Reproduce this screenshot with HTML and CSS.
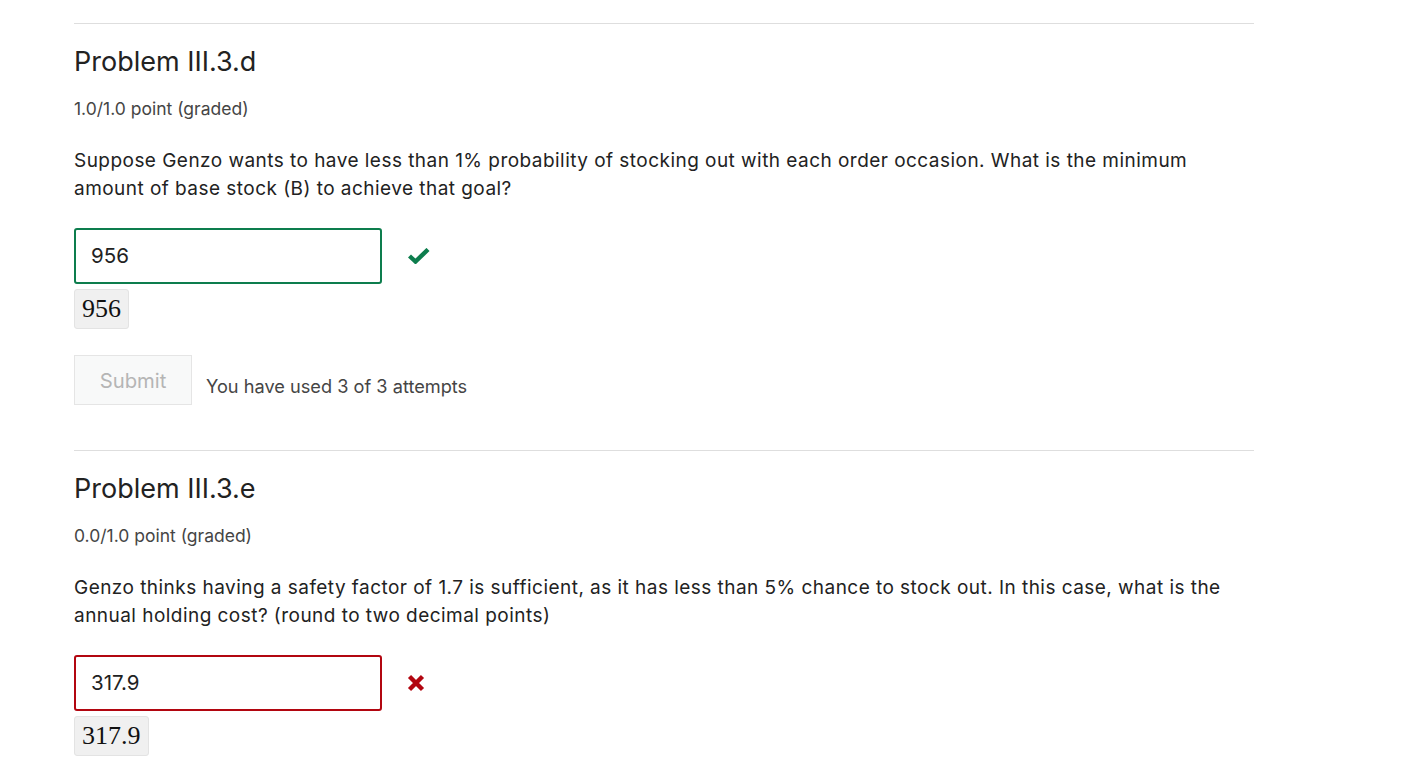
FILE: index.html
```html
<!DOCTYPE html>
<html>
<head>
<meta charset="utf-8">
<link rel="stylesheet" href="styles.css">
</head>
<body>
<div class="page">
  <section class="problem">
    <h3 class="title">Problem III.3.d</h3>
    <div class="points">1.0/1.0 point (graded)</div>
    <p class="question">Suppose Genzo wants to have less than 1% probability of stocking out with each order occasion. What is the minimum amount of base stock (B) to achieve that goal?</p>
    <div class="answer-row">
      <div class="input correct">956</div>
      <svg class="icon" width="22" height="16" viewBox="0 0 22 16"><path d="M1.5 8 L7.5 13.5 L20 1.5" fill="none" stroke="#0d7d4d" stroke-width="4.4" stroke-linejoin="miter"/></svg>
    </div>
    <div class="math">956</div>
    <div class="actions">
      <button class="submit">Submit</button>
      <span class="attempts">You have used 3 of 3 attempts</span>
    </div>
  </section>
  <section class="problem">
    <h3 class="title">Problem III.3.e</h3>
    <div class="points">0.0/1.0 point (graded)</div>
    <p class="question">Genzo thinks having a safety factor of 1.7 is sufficient, as it has less than 5% chance to stock out. In this case, what is the annual holding cost? (round to two decimal points)</p>
    <div class="answer-row">
      <div class="input incorrect">317.9</div>
      <svg class="icon x" width="18" height="18" viewBox="0 0 18 18"><path d="M2.5 2.5 L15.5 15.5 M15.5 2.5 L2.5 15.5" fill="none" stroke="#b20610" stroke-width="4.4"/></svg>
    </div>
    <div class="math">317.9</div>
  </section>
</div>
</body>
</html>
```
FILE: styles.css
```css
html, body { margin: 0; padding: 0; background: #fff; }
body { font-family: Inter, "Noto Sans", sans-serif; color: #212529; }
.page { width: 1180px; margin-left: 74px; padding-top: 23px; }
.problem { border-top: 1px solid #dedede; padding-top: 19px; padding-bottom: 45px; }
.title { font-size: 27px; font-weight: 400; margin: 0; line-height: 38px; color: #222; }
.points { font-size: 17.5px; color: #454545; margin-top: 16px; line-height: 24px; }
.question { font-size: 19px; letter-spacing: 0.46px; line-height: 28px; margin: 26px 0 25px 0; color: #222; }
.answer-row { display: flex; align-items: center; gap: 26px; }
.input { width: 308px; height: 56px; box-sizing: border-box; border: 2px solid #ccc; border-radius: 3px; padding: 0 15px; font-size: 20.5px; line-height: 52px; color: #222; }
.input.correct { border-color: #0d7d4d; }
.input.incorrect { border-color: #b20610; }
.icon { display: block; }
.icon.x { margin-left: -1px; }
.math { display: inline-block; margin-top: 5px; background: #f0f0f0; border: 1px solid #e3e3e3; border-radius: 3px; padding: 0 7px; font-family: "Liberation Serif", serif; font-size: 26px; line-height: 38px; color: #111; }
.actions { display: flex; align-items: flex-end; gap: 14px; margin-top: 26px; }
.submit { width: 118px; height: 50px; background: #f8f9f9; border: 1px solid #e5e5e5; border-radius: 0; color: #b5b5b5; font-family: Inter, sans-serif; font-size: 20.3px; padding: 0; }
.attempts { font-size: 18.2px; color: #454545; line-height: 24px; padding-bottom: 7px; }
```
